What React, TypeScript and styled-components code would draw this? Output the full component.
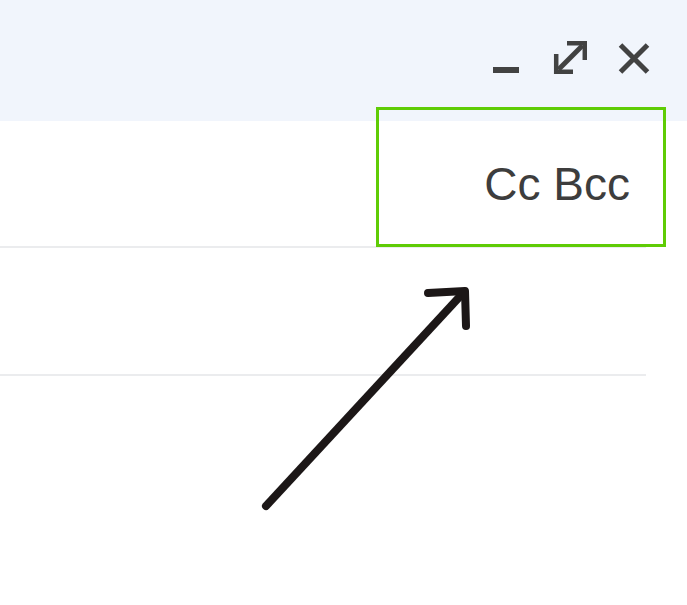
import React from "react";
import styled, { createGlobalStyle } from "styled-components";

const Global = createGlobalStyle`
  html, body { margin: 0; padding: 0; background: #ffffff; }
  body { font-family: "Liberation Sans", Arial, sans-serif; }
`;

const Page = styled.div`
  position: relative;
  width: 687px;
  height: 605px;
  overflow: hidden;
  background: #ffffff;
`;

const Header = styled.header`
  height: 121px;
  background: #f1f5fc;
  display: flex;
  justify-content: flex-end;
  align-items: flex-start;
  gap: 30px;
  padding: 40px 36px 0 0;
  box-sizing: border-box;
`;

const IconButton = styled.button`
  width: 34px;
  height: 34px;
  padding: 0;
  margin: 0;
  border: none;
  background: transparent;
  display: flex;
  align-items: center;
  justify-content: center;
  cursor: pointer;
  color: #424242;
`;

const Fields = styled.div`
  width: 646px;
  display: flex;
  flex-direction: column;
`;

const FieldRow = styled.div<{ $h: number }>`
  box-sizing: border-box;
  height: ${(p) => p.$h}px;
  border-bottom: 2px solid #ebecee;
  display: flex;
  align-items: center;
  justify-content: flex-end;
  padding-right: 16px;
`;

const CcBcc = styled.span`
  font-size: 46px;
  color: #3d3d3d;
`;

const Highlight = styled.div`
  position: absolute;
  left: 376px;
  top: 107px;
  width: 290px;
  height: 140px;
  box-sizing: border-box;
  border: 3px solid #5fcc05;
  pointer-events: none;
`;

const ArrowLayer = styled.svg`
  position: absolute;
  left: 0;
  top: 0;
  pointer-events: none;
`;

export default function App() {
  return (
    <>
      <Global />
      <Page>
        <Header>
          <IconButton aria-label="Minimize">
            <svg width="34" height="34" viewBox="0 0 34 34">
              <rect x="4" y="27" width="26" height="6" fill="currentColor" />
            </svg>
          </IconButton>
          <IconButton aria-label="Expand">
            <svg width="34" height="34" viewBox="0 0 34 34" fill="none" stroke="currentColor" strokeWidth="4.5">
              <path d="M14 3.2 H31.8 V20" strokeLinejoin="miter" />
              <path d="M3.2 14 V31.8 H20" strokeLinejoin="miter" />
              <path d="M5.5 29.5 L29.5 5.5" strokeWidth="5" />
            </svg>
          </IconButton>
          <IconButton aria-label="Close">
            <svg width="34" height="34" viewBox="0 0 34 34" fill="none" stroke="currentColor" strokeWidth="5">
              <path d="M3.5 5 L30.5 32 M30.5 5 L3.5 32" />
            </svg>
          </IconButton>
        </Header>
        <Fields>
          <FieldRow $h={127}>
            <CcBcc>Cc Bcc</CcBcc>
          </FieldRow>
          <FieldRow $h={128} />
        </Fields>
        <Highlight />
        <ArrowLayer width="687" height="605" viewBox="0 0 687 605">
          <g fill="none" stroke="#1c1717" strokeWidth="8" strokeLinecap="round" strokeLinejoin="round">
            <path d="M266 506 L464 292" />
            <path d="M428 293 L465 291 L466 326" />
          </g>
        </ArrowLayer>
      </Page>
    </>
  );
}
